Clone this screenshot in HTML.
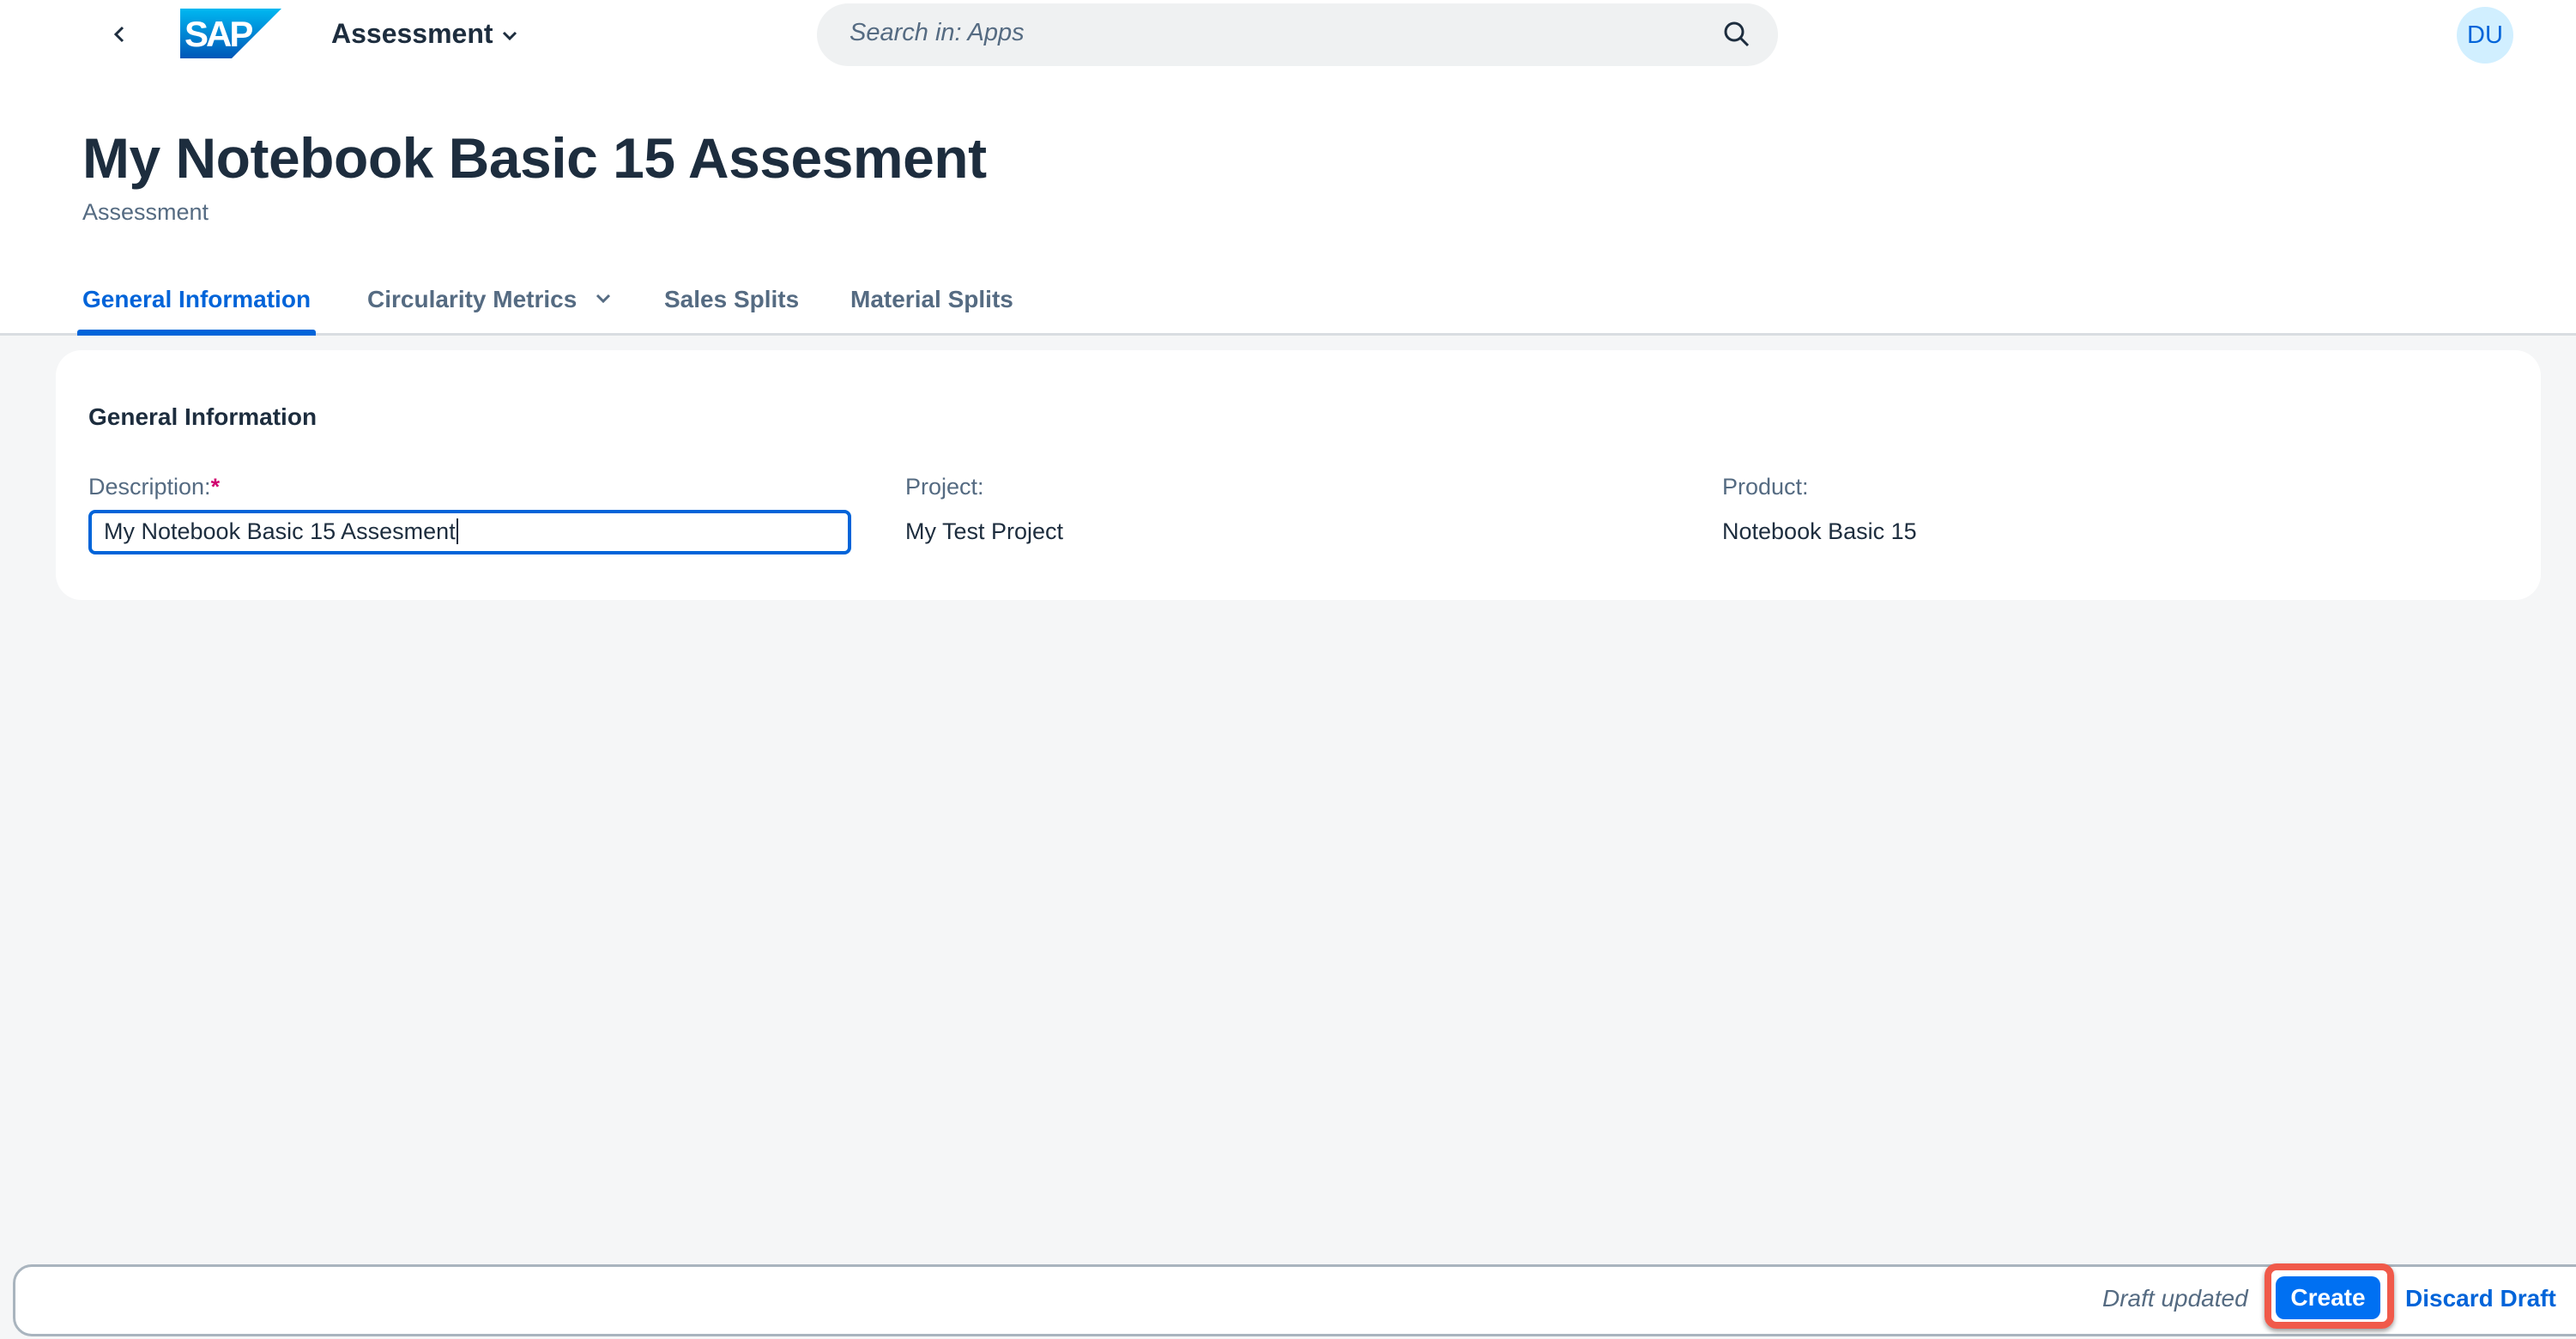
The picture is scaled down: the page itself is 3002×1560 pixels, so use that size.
<!DOCTYPE html>
<html><head><meta charset="utf-8"><style>
*{box-sizing:border-box;margin:0;padding:0}
body{width:3002px;height:1560px;background:#f5f6f7;font-family:"Liberation Sans",sans-serif;position:relative;overflow:hidden;color:#1d2d3e}
.abs{position:absolute;white-space:nowrap}
#hdr{position:absolute;left:0;top:0;width:3002px;height:391px;background:#fff;border-bottom:3px solid #d9dde1}
</style></head><body>
<div id="hdr"></div>
<svg class="abs" style="left:128px;top:28px" width="24" height="24" viewBox="0 0 24 24"><path d="M15 4 L7 12 L15 20" fill="none" stroke="#1d2d3e" stroke-width="3"/></svg>
<svg class="abs" style="left:210px;top:10px" width="118" height="58" viewBox="0 0 118 58"><defs><linearGradient id="g" x1="0" y1="0" x2="0" y2="1"><stop offset="0" stop-color="#00b8f1"/><stop offset="1" stop-color="#0057b8"/></linearGradient></defs><polygon points="0,0 118,0 60,58 0,58" fill="url(#g)"/><text x="5" y="44" font-family="Liberation Sans" font-weight="bold" font-size="42" fill="#fff" letter-spacing="-3">SAP</text></svg>
<div class="abs" style="left:386px;top:21px;font-size:32px;font-weight:bold;color:#1d2d3e">Assessment</div>
<svg class="abs" style="left:582px;top:32px" width="24" height="20" viewBox="0 0 24 20"><path d="M5 6 L12 13 L19 6" fill="none" stroke="#1d2d3e" stroke-width="3"/></svg>
<div class="abs" style="left:952px;top:4px;width:1120px;height:73px;border-radius:37px;background:#eff1f2"></div>
<div class="abs" style="left:990px;top:22px;font-size:29px;font-style:italic;color:#556b82">Search in: Apps</div>
<svg class="abs" style="left:2006px;top:22px" width="36" height="36" viewBox="0 0 36 36"><circle cx="15" cy="15" r="10" fill="none" stroke="#1d2d3e" stroke-width="3"/><path d="M22 22 L31 31" stroke="#1d2d3e" stroke-width="3"/></svg>
<div class="abs" style="left:2863px;top:8px;width:66px;height:66px;border-radius:50%;background:#d1efff;color:#0064d9;font-size:29px;text-align:center;line-height:66px">DU</div>
<div class="abs" style="left:96px;top:146px;font-size:66px;font-weight:bold;color:#1d2d3e;letter-spacing:-0.5px">My Notebook Basic 15 Assesment</div>
<div class="abs" style="left:96px;top:232px;font-size:27px;color:#556b82">Assessment</div>
<div class="abs" style="left:96px;top:333px;font-size:28px;font-weight:bold;color:#0064d9">General Information</div>
<div class="abs" style="left:90px;top:384px;width:278px;height:7px;background:#0064d9;border-radius:3px 3px 0 0"></div>
<div class="abs" style="left:428px;top:333px;font-size:28px;font-weight:bold;color:#556b82">Circularity Metrics</div>
<svg class="abs" style="left:692px;top:338px" width="22" height="20" viewBox="0 0 22 20"><path d="M4 6 L11 13 L18 6" fill="none" stroke="#556b82" stroke-width="3"/></svg>
<div class="abs" style="left:774px;top:333px;font-size:28px;font-weight:bold;color:#556b82">Sales Splits</div>
<div class="abs" style="left:991px;top:333px;font-size:28px;font-weight:bold;color:#556b82">Material Splits</div>
<div class="abs" style="left:65px;top:408px;width:2896px;height:291px;background:#fff;border-radius:30px"></div>
<div class="abs" style="left:103px;top:470px;font-size:28px;font-weight:bold;color:#1d2d3e">General Information</div>
<div class="abs" style="left:103px;top:552px;font-size:27px;color:#556b82">Description:<span style="color:#d0006f;font-weight:bold">*</span></div>
<div class="abs" style="left:103px;top:594px;width:889px;height:52px;border:4px solid #0064d9;border-radius:8px;background:#fff"></div>
<div class="abs" style="left:121px;top:604px;font-size:27px;color:#1d2d3e">My Notebook Basic 15 Assesment<span style="border-left:2px solid #1d2d3e;margin-left:1px"></span></div>
<div class="abs" style="left:1055px;top:552px;font-size:27px;color:#556b82">Project:</div>
<div class="abs" style="left:1055px;top:604px;font-size:27px;color:#1d2d3e">My Test Project</div>
<div class="abs" style="left:2007px;top:552px;font-size:27px;color:#556b82">Product:</div>
<div class="abs" style="left:2007px;top:604px;font-size:27px;color:#1d2d3e">Notebook Basic 15</div>
<div class="abs" style="left:15px;top:1473px;width:3010px;height:84px;border:3px solid #a9b4be;border-radius:22px;background:#fff"></div>
<div class="abs" style="left:2450px;top:1497px;font-size:28px;font-style:italic;color:#556b82">Draft updated</div>
<div class="abs" style="left:2639px;top:1472px;width:151px;height:76px;border:8px solid #f05a4a;border-radius:14px;box-shadow:0 3px 6px rgba(0,0,0,.4)"></div>
<div class="abs" style="left:2652px;top:1487px;width:122px;height:50px;background:#0070f2;border-radius:10px;color:#fff;font-size:28px;font-weight:bold;text-align:center;line-height:50px">Create</div>
<div class="abs" style="left:2803px;top:1497px;font-size:28px;font-weight:bold;color:#0064d9">Discard Draft</div>
</body></html>
